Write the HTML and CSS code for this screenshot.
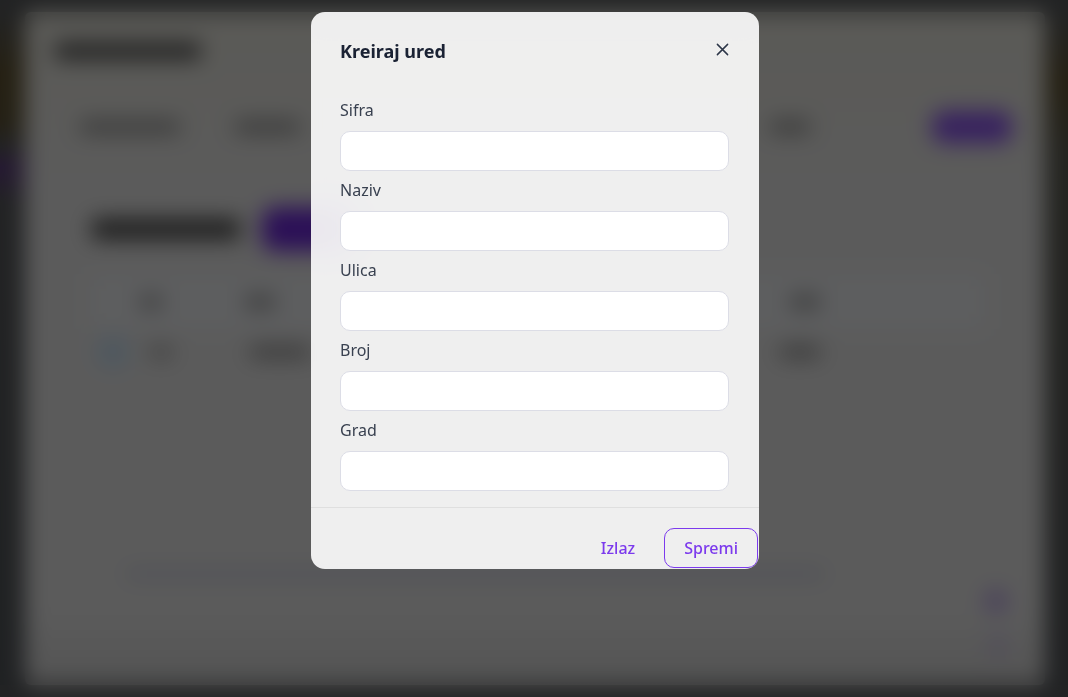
FILE: index.html
```html
<!DOCTYPE html>
<html lang="hr">

<head>
    <meta charset="UTF-8">
    <meta name="viewport" content="width=device-width, initial-scale=1.0">
    <title>Kreiraj ured</title>
    <link rel="stylesheet" href="styles.css">
</head>

<body>

<!-- page behind the dialog -->
<div class="app">
    <aside class="edge edge-left"></aside>

    <main class="card">
        <div class="topbar">
            <span class="blk blk-title"></span>
        </div>

        <nav class="nav">
            <span class="blk nav-a"></span>
            <span class="blk nav-b"></span>
            <span class="nav-space"></span>
            <span class="blk nav-c"></span>
            <span class="pill nav-pill"></span>
        </nav>

        <section class="content">
            <div class="heading-row">
                <span class="blk blk-heading"></span>
                <span class="pill heading-pill"></span>
            </div>

            <div class="table">
                <div class="thead">
                    <span class="blk th-a"></span>
                    <span class="blk th-b"></span>
                    <span class="blk th-c"></span>
                </div>
                <div class="trow">
                    <span class="avatar"></span>
                    <span class="blk td-a"></span>
                    <span class="blk td-b"></span>
                    <span class="blk td-c"></span>
                </div>
            </div>

            <div class="pager-line"></div>

            <div class="fab-col">
                <span class="dot dot-main"></span>
                <span class="dot dot-faint"></span>
            </div>
        </section>
    </main>

    <aside class="edge edge-right"></aside>
</div>

<div class="overlay"></div>

<div class="modal-wrap">
    <form class="modal" onsubmit="event.preventDefault()">
        <header class="modal-head">
            <h2>Kreiraj ured</h2>
            <button type="button" class="close-btn" aria-label="Zatvori">
                <svg width="14" height="14" viewBox="0 0 14 14">
                    <path d="M1.5 1.5 L12.5 12.5 M12.5 1.5 L1.5 12.5" stroke="#2d3748" stroke-width="1.6" stroke-linecap="round" fill="none"/>
                </svg>
            </button>
        </header>

        <div class="modal-body">
            <label for="sifra">Sifra</label>
            <input type="text" id="sifra" name="sifra">

            <label for="naziv">Naziv</label>
            <input type="text" id="naziv" name="naziv">

            <label for="ulica">Ulica</label>
            <input type="text" id="ulica" name="ulica">

            <label for="broj">Broj</label>
            <input type="text" id="broj" name="broj">

            <label for="grad">Grad</label>
            <input type="text" id="grad" name="grad">
        </div>

        <footer class="modal-foot">
            <button type="button" class="btn btn-ghost">Izlaz</button>
            <button type="submit" class="btn btn-outline">Spremi</button>
        </footer>
    </form>
</div>

</body>
</html>
```

FILE: styles.css
```css
* {
    box-sizing: border-box;
}

body {
    margin: 0;
    height: 697px;
    overflow: hidden;
    background-color: #56585a;
    font-family: "Noto Sans", "Open Sans", sans-serif;
}

/* ---------- background page ---------- */

.app {
    display: flex;
    height: 100%;
    padding: 12px 0;
}

.edge {
    width: 25px;
    flex-shrink: 0;
}

.edge-left {
    background: linear-gradient(to bottom, #56585a 0, #5e5232 60px, #5c5236 110px, #56585a 135px, #5e3e80 155px, #56585a 190px, #505458 100%);
}

.edge-right {
    width: 23px;
    background: linear-gradient(to bottom, #56585a 0, #5e5232 70px, #5a5a50 140px, #515458 100%);
}

.card {
    flex: 1;
    display: flex;
    flex-direction: column;
    background: linear-gradient(to bottom, #e2e1d8 0, #e4e4e4 180px, #e4e4e4 600px, #d2d2d2 100%);
    border-radius: 6px;
}

.blk {
    display: block;
    height: 12px;
    border-radius: 4px;
    background-color: #666;
}

.pill {
    display: block;
    border-radius: 12px;
    background-color: #7c3aed;
}

.topbar {
    height: 78px;
    display: flex;
    align-items: center;
    padding-left: 30px;
}

.blk-title {
    width: 146px;
    height: 16px;
    background-color: #4a4a4a;
}

.nav {
    height: 74px;
    display: flex;
    align-items: center;
    padding: 0 33px 0 55px;
}

.nav-a {
    width: 100px;
    height: 12px;
    background-color: #888;
}

.nav-b {
    width: 65px;
    height: 12px;
    margin-left: 55px;
    background-color: #888;
}

.nav-space {
    flex: 1;
}

.nav-c {
    width: 40px;
    height: 12px;
    margin-right: 122px;
    background-color: #888;
}

.nav-pill {
    width: 80px;
    height: 32px;
    background-color: #8a52ee;
}

.content {
    flex: 1;
    display: flex;
    flex-direction: column;
    padding: 43px 60px 0 65px;
}

.heading-row {
    display: flex;
    align-items: center;
    padding-left: 2px;
}

.blk-heading {
    width: 148px;
    height: 20px;
    background-color: #444;
}

.heading-pill {
    width: 90px;
    height: 44px;
    margin-left: 22px;
    background-color: #6d28d9;
}

.table {
    width: 895px;
    margin-top: 23px;
}

.thead {
    height: 55px;
    display: flex;
    align-items: center;
    background-color: #e9ebee;
    border-radius: 4px;
}

.trow {
    height: 45px;
    display: flex;
    align-items: center;
}

.th-a { width: 22px; margin-left: 50px; background-color: #8a8a8a; }
.th-b { width: 30px; margin-left: 83px; background-color: #8a8a8a; }
.th-c { width: 30px; margin-left: 515px; background-color: #8a8a8a; }

.avatar {
    width: 34px;
    height: 34px;
    margin-left: 6px;
    border-radius: 50%;
    background-color: #c4dcf0;
}

.td-a { width: 22px; margin-left: 20px; background-color: #999; }
.td-b { width: 60px; margin-left: 78px; background-color: #888; }
.td-c { width: 40px; margin-left: 470px; background-color: #888; }

.pager-line {
    width: 700px;
    height: 10px;
    margin: 195px 0 0 35px;
    border-radius: 4px;
    background-color: #c6c8d8;
}

.fab-col {
    display: flex;
    flex-direction: column;
    align-items: flex-end;
    gap: 22px;
    margin-top: 10px;
    margin-right: -23px;
}

.dot {
    display: block;
    border-radius: 50%;
}

.dot-main {
    width: 24px;
    height: 24px;
    background-color: #b7a0e4;
}

.dot-faint {
    width: 20px;
    height: 20px;
    background-color: #c9bde2;
}

.overlay {
    position: fixed;
    inset: 0;
    background-color: rgba(0, 0, 0, 0.6);
    backdrop-filter: blur(11px);
}

/* ---------- dialog ---------- */

.modal-wrap {
    position: fixed;
    inset: 0;
    display: flex;
    justify-content: center;
    align-items: flex-start;
    padding: 12px 0 0 2px;
}

.modal {
    width: 448px;
    margin: 0;
    background-color: rgba(255, 255, 255, 0.9);
    backdrop-filter: blur(12px);
    border-radius: 14px;
    overflow: hidden;
}

.modal-head {
    display: flex;
    justify-content: space-between;
    align-items: center;
    padding: 24px 30px 22px 29px;
}

.modal-head h2 {
    margin: 0;
    font-size: 18px;
    line-height: 30px;
    font-weight: 700;
    color: #1a2233;
}

.close-btn {
    width: 24px;
    height: 24px;
    padding: 0;
    margin-right: -5px;
    margin-top: -4px;
    border: none;
    background: none;
    display: flex;
    align-items: center;
    justify-content: center;
    cursor: pointer;
}

.close-btn svg {
    width: 13px;
    height: 13px;
}

.modal-body {
    padding: 10px 30px 16px 29px;
    border-bottom: 1px solid #dfdfdf;
}

.modal-body label {
    display: block;
    font-size: 16px;
    line-height: 24px;
    color: #394150;
    margin-bottom: 9px;
}

.modal-body input {
    display: block;
    width: 100%;
    height: 40px;
    margin-bottom: 7px;
    padding: 0 12px;
    border: 1px solid #dcdde6;
    border-radius: 10px;
    background-color: #fff;
    font-family: inherit;
    font-size: 16px;
}

.modal-body input:last-child {
    margin-bottom: 0;
}

.modal-foot {
    display: flex;
    justify-content: flex-end;
    align-items: center;
    gap: 8px;
    padding: 20px 1px 1px 29px;
}

.btn {
    height: 40px;
    padding: 0 20px;
    border-radius: 10px;
    font-family: inherit;
    font-size: 16px;
    font-weight: 500;
    color: #7c3aed;
    background: none;
    cursor: pointer;
}

.btn-ghost {
    border: 1px solid transparent;
}

.btn-outline {
    padding: 0 19px;
    border: 1px solid #7c3aed;
}
```
